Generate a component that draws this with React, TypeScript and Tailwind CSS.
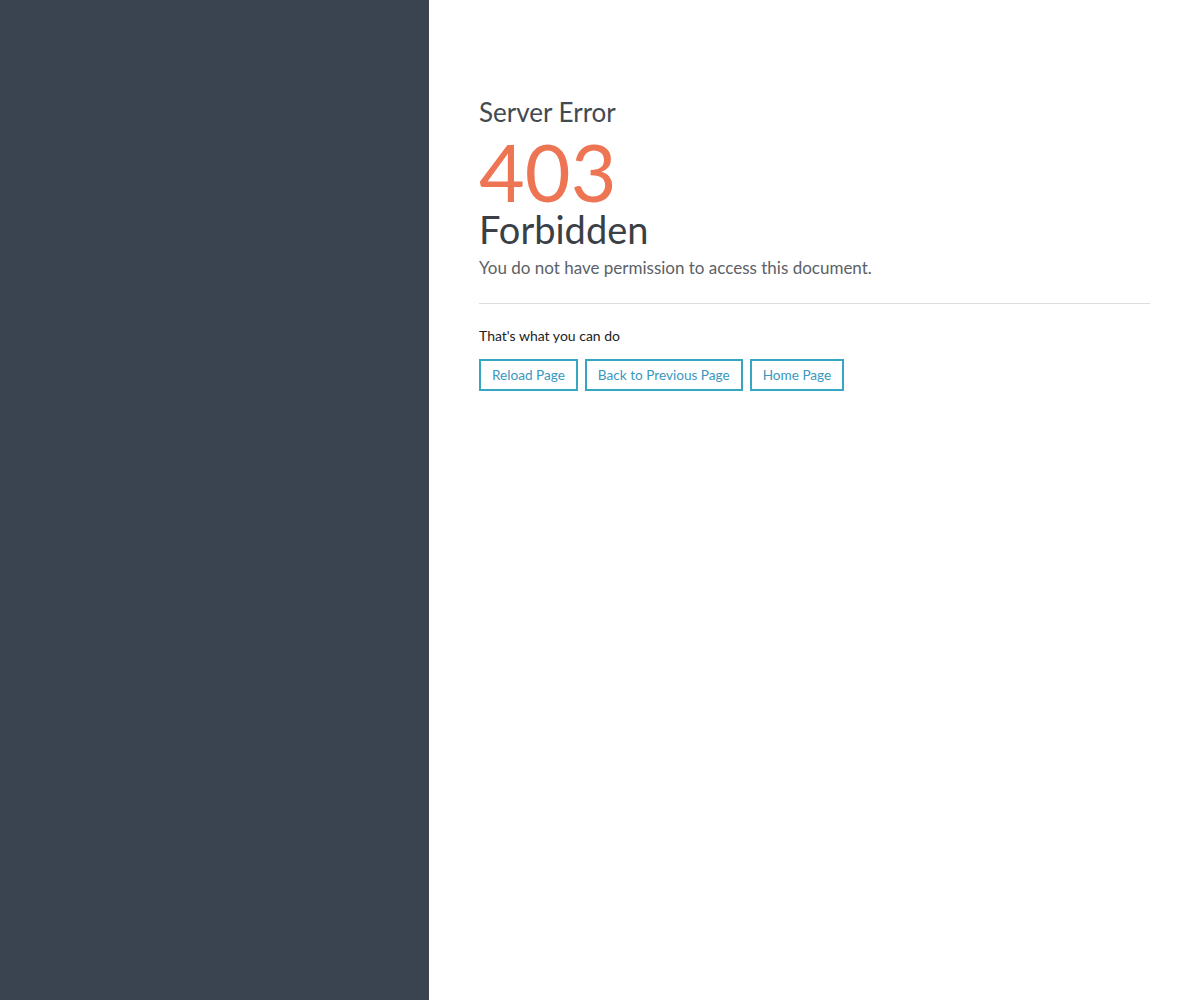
export default function App() {
  return (
    <div className="flex h-[1000px] w-[1200px] bg-white" style={{ fontFamily: "Lato, 'Noto Sans', sans-serif" }}>
      <div className="w-[429px] shrink-0 bg-[#3a4450]" />
      <div className="flex-1 px-[50px] pt-[96px]">
        <div className="text-[26px] leading-[32px] text-[#444a50]">Server Error</div>
        <div className="mt-[6px] text-[79px] leading-[76px] text-[#ee7553]">403</div>
        <div className="text-[38px] leading-[38px] text-[#3b4046]">Forbidden</div>
        <div className="mt-[8px] text-[17px] leading-[24px] text-[#5b6168]">You do not have permission to access this document.</div>
        <div className="mt-[23px] h-px bg-[#dedede]" />
        <div className="mt-[22px] text-[14px] leading-[20px] text-[#222]">That's what you can do</div>
        <div className="mt-[13px] flex gap-[7px]">
          <button className="h-[32px] border-2 border-[#37a6c2] px-[11px] text-[13.6px] text-[#3a97bf]">Reload Page</button>
          <button className="h-[32px] border-2 border-[#37a6c2] px-[11px] text-[13.6px] text-[#3a97bf]">Back to Previous Page</button>
          <button className="h-[32px] border-2 border-[#37a6c2] px-[11px] text-[13.6px] text-[#3a97bf]">Home Page</button>
        </div>
      </div>
    </div>
  );
}
